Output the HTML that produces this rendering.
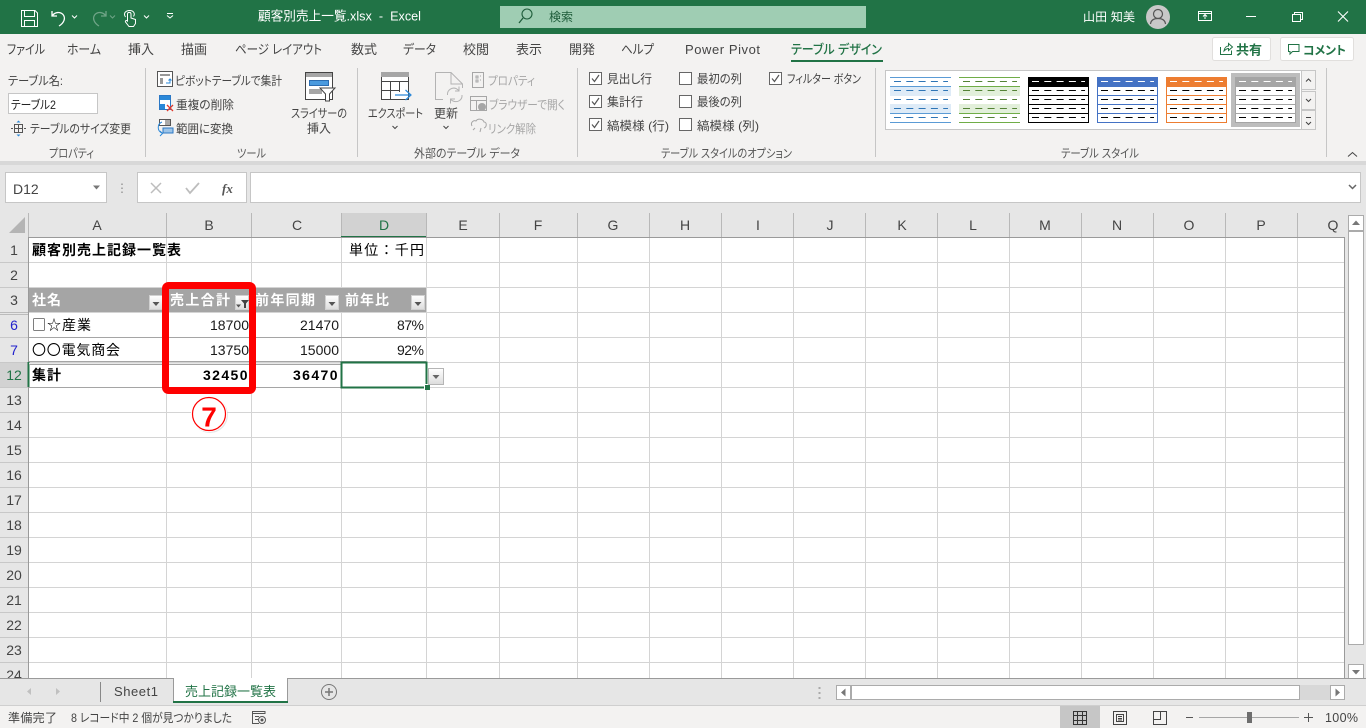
<!DOCTYPE html>
<html lang="ja"><head><meta charset="utf-8"><title>顧客別売上一覧.xlsx - Excel</title>
<style>
html,body{margin:0;padding:0;width:1366px;height:728px;overflow:hidden;background:#fff}
svg{display:block;position:absolute;left:0;top:0}
text{font-family:"Liberation Sans","Noto Sans CJK JP",sans-serif;font-size:12px;fill:#444;white-space:pre;font-feature-settings:"palt"}
.m{text-anchor:middle}
.e{text-anchor:end}
.w{fill:#fff}
.g{fill:#a6a6a6}
.l{fill:#555}
.t{font-size:13px}
.c{font-size:14px;fill:#000;font-feature-settings:normal}
.j{font-family:"Noto Sans CJK JP",sans-serif}
.b{font-size:14px;font-weight:700;fill:#000;font-feature-settings:normal}
.h{font-size:14px;font-weight:700;fill:#fff;font-feature-settings:normal}
.n{font-size:14px;fill:#444;text-anchor:middle}
.hd{font-size:14px;fill:#444;text-anchor:middle}
</style></head><body>
<svg width="1366" height="728" viewBox="0 0 1366 728" xmlns="http://www.w3.org/2000/svg">
<defs>
<g id="th">
<rect x=".5" y=".5" width="60" height="45" fill="#fff" stroke="currentColor"/>
<rect x="0" y="0" width="61" height="9.5" fill="currentColor"/>
<path d="M0 9.5H61M0 18.5H61M0 27.5H61M0 36.5H61" stroke="currentColor"/>
<path d="M4 4.5H57" stroke="#fff" stroke-dasharray="7 5.3"/>
<path d="M4 13.5H57M4 22.5H57M4 31.5H57M4 40.5H57" stroke="#000" stroke-dasharray="7 5.3"/>
</g>
<g id="fb"><rect x=".5" y=".5" width="13" height="14" fill="url(#fg)" stroke="#d0d0d0"/></g>
<linearGradient id="fg" x1="0" y1="0" x2="0" y2="1"><stop offset="0" stop-color="#fff"/><stop offset="1" stop-color="#dcdcdc"/></linearGradient>
</defs>

<!-- title bar -->
<rect width="1366" height="34" fill="#217346"/>
<g fill="none" stroke="#fff" stroke-width="1">
<path d="M21.500 10.500H35L37.500 13V26.500H21.500Z"/><path d="M24.500 10.500V16.500H34.500V10.500M24.500 26.500V20.500H34.500V26.500"/>
<path d="M52 11V16H57M52.500 15.500C55 12 60 11.500 63 14.500C66 18 64 23 59 26" stroke-width="1.300"/>
<path d="M72 15.500L74.500 18L77 15.500"/>
<g opacity=".35"><path d="M106 11V16H101M105.500 15.500C103 12 98 11.500 95 14.500C92 18 94 23 99 26" stroke-width="1.300"/><path d="M110 15.500L112.500 18L115 15.500"/></g>
<path d="M125.500 17C123 13.500 125.500 10.500 129.500 10.500C133.500 10.500 135.500 13.500 133.500 16.500M127.500 21V14C127.500 11.800 131 11.800 131 14V18L135.500 19.500V23.500L133.500 26.500H129L125.500 22C125 20.500 126.500 20 127.500 21Z"/>
<path d="M144 15.500L146.500 18L149 15.500M167 15.500L170 18L173 15.500M167 13.500H173"/>
</g>
<text x="258" y="20.500" class="w t" textLength="163" lengthAdjust="spacingAndGlyphs" style="font-feature-settings:normal">顧客別売上一覧.xlsx  -  Excel</text>
<rect x="500" y="6" width="366" height="22" fill="#9fcdb3"/>
<circle cx="527" cy="14" r="5" fill="none" stroke="#1e5c3a" stroke-width="1.100"/><path d="M523 18L519 23" stroke="#1e5c3a" stroke-width="1.300"/>
<text x="549" y="21" textLength="24" style="fill:#1e5c3a">検索</text>
<text x="1083" y="21" class="w" textLength="52">山田 知美</text>
<circle cx="1158" cy="17" r="12" fill="#c8c8c8"/>
<circle cx="1158" cy="14" r="4.500" fill="none" stroke="#555" stroke-width="1.200"/><path d="M1150.500 24C1151 20 1154 18.500 1158 18.500C1162 18.500 1165 20 1165.500 24" fill="none" stroke="#555" stroke-width="1.200"/>
<g fill="none" stroke="#fff">
<path d="M1198.500 11.500H1211.500V20.500H1198.500ZM1198.500 13.500H1211.500M1205 19V15M1203 16.500L1205 14.500L1207 16.500"/>
<path d="M1246 16.500H1256"/>
<path d="M1292.500 14.500H1300.500V21.500H1292.500ZM1294.500 14.500V12.500H1302.500V19.500H1300.500"/>
<path d="M1338 11.500L1348 21.500M1348 11.500L1338 21.500" stroke-width="1.100"/>
</g>

<!-- ribbon -->
<rect y="34" width="1366" height="127" fill="#f3f2f1"/>
<rect y="161" width="1366" height="4" fill="#d8d8d8"/>
<text x="7" y="54" class="t" textLength="38" lengthAdjust="spacingAndGlyphs">ファイル</text>
<text x="67" y="54" class="t" textLength="34" lengthAdjust="spacingAndGlyphs">ホーム</text>
<text x="128" y="54" class="t" textLength="26" lengthAdjust="spacingAndGlyphs">挿入</text>
<text x="181" y="54" class="t" textLength="26" lengthAdjust="spacingAndGlyphs">描画</text>
<text x="235" y="54" class="t" textLength="87" lengthAdjust="spacingAndGlyphs">ページ レイアウト</text>
<text x="351" y="54" class="t" textLength="26" lengthAdjust="spacingAndGlyphs">数式</text>
<text x="403" y="54" class="t" textLength="33" lengthAdjust="spacingAndGlyphs">データ</text>
<text x="463" y="54" class="t" textLength="26" lengthAdjust="spacingAndGlyphs">校閲</text>
<text x="516" y="54" class="t" textLength="26" lengthAdjust="spacingAndGlyphs">表示</text>
<text x="569" y="54" class="t" textLength="26" lengthAdjust="spacingAndGlyphs">開発</text>
<text x="621" y="54" class="t" textLength="33" lengthAdjust="spacingAndGlyphs">ヘルプ</text>
<text x="685" y="54" class="t" textLength="75">Power Pivot</text>
<text x="791" y="54" class="t" textLength="91" lengthAdjust="spacingAndGlyphs" style="fill:#217346;font-weight:500">テーブル デザイン</text>
<rect x="791" y="60" width="92" height="2" fill="#217346"/>
<rect x="1212.500" y="37.500" width="58" height="23" rx="2" fill="#fff" stroke="#e1dfdd"/>
<path d="M1220.500 47V54.500H1231.500V50.500M1224 51C1224.500 47.500 1226.500 46 1228.500 46V43.500L1232.500 47L1228.500 50.500V48.500C1227 48.500 1225.500 49.500 1224 51Z" fill="none" stroke="#217346"/>
<text x="1236" y="54.500" textLength="26" style="fill:#217346;font-weight:700;font-size:13px">共有</text>
<rect x="1280.500" y="37.500" width="73" height="23" rx="2" fill="#fff" stroke="#e1dfdd"/>
<path d="M1288.500 44.500H1299V51.500H1292.500L1290 54V51.500H1288.500Z" fill="none" stroke="#217346"/>
<text x="1303" y="54.500" textLength="43" lengthAdjust="spacingAndGlyphs" style="fill:#217346;font-weight:700">コメント</text>

<rect x="145" y="68" width="1" height="89" fill="#c6c6c6"/>
<rect x="357" y="68" width="1" height="89" fill="#c6c6c6"/>
<rect x="577" y="68" width="1" height="89" fill="#c6c6c6"/>
<rect x="875" y="68" width="1" height="89" fill="#c6c6c6"/>
<rect x="1326" y="68" width="1" height="89" fill="#c6c6c6"/>

<!-- properties -->
<text x="8" y="85" textLength="55" lengthAdjust="spacingAndGlyphs">テーブル名:</text>
<rect x="8.500" y="93.500" width="89" height="20" fill="#fff" stroke="#c6c6c6"/>
<text x="11" y="109" textLength="45" lengthAdjust="spacingAndGlyphs" style="fill:#222">テーブル2</text>
<path d="M14.500 124.500H22.500V132.500H14.500ZM14.500 128.500H22.500M18.500 124.500V132.500M11 128.500H13M24 128.500H26" fill="none" stroke="#555"/><path d="M18.500 120.500L16.500 122.500H20.500ZM18.500 136.500L16.500 134.500H20.500Z" fill="#2b88d8"/>
<text x="30" y="133" textLength="101" lengthAdjust="spacingAndGlyphs">テーブルのサイズ変更</text>
<text x="49" y="157.500" class="l" textLength="45" lengthAdjust="spacingAndGlyphs">プロパティ</text>

<!-- tools -->
<path d="M157.500 71.500H172.500V86.500H157.500Z" fill="#fff" stroke="#555"/><path d="M160 74H170V76H160ZM160 78H163V84H160Z" fill="#999"/><path d="M166 83H170V79M168.500 80.500L170 79L171.500 80.500" fill="none" stroke="#2b88d8"/>
<text x="175" y="85" textLength="107" lengthAdjust="spacingAndGlyphs">ピボットテーブルで集計</text>
<path d="M159.500 95.500H170.500V109.500H159.500Z" fill="#fff" stroke="#2b78c5"/><rect x="160" y="96" width="10" height="4" fill="#2b88d8"/><rect x="160" y="104" width="5" height="5" fill="#2b88d8"/><path d="M167 105L173 111M173 105L167 111" stroke="#e03a2e" stroke-width="1.300"/>
<text x="176" y="109" textLength="58" lengthAdjust="spacingAndGlyphs">重複の削除</text>
<path d="M159.500 119.500H170.500V125.500H159.500Z" fill="#fff" stroke="#555"/><rect x="165" y="120" width="5" height="5" fill="#aaa"/><rect x="163" y="128" width="10" height="5" fill="#9cc4e8" stroke="#2b78c5"/><path d="M162 122C157 124 157 131 162 133M160 131L162.500 133.500L160 136" fill="none" stroke="#2b88d8"/>
<text x="176" y="133" textLength="57" lengthAdjust="spacingAndGlyphs">範囲に変換</text>
<path d="M305.500 72.500H332.500V99.500H305.500Z" fill="#fff" stroke="#444"/><rect x="306" y="73" width="26" height="4" fill="#a6a6a6"/><rect x="309.500" y="80.500" width="19" height="5" fill="#4a9ade" stroke="#2b6cb0"/><rect x="309" y="89" width="13" height="5" fill="#a6a6a6"/>
<path d="M320 88H335L329.500 94V101H325.500V94Z" fill="#fff" stroke="#444"/>
<text x="291" y="117.500" textLength="56" lengthAdjust="spacingAndGlyphs">スライサーの</text>
<text x="307" y="132.500" textLength="24" lengthAdjust="spacingAndGlyphs">挿入</text>
<text x="237" y="157.500" class="l" textLength="29" lengthAdjust="spacingAndGlyphs">ツール</text>

<!-- external -->
<path d="M381.500 72.500H408.500V99.500H381.500ZM381.500 81.500H408.500M381.500 90.500H400M390.500 81.500V99.500M399.500 81.500V92" fill="#fff" stroke="#444"/><rect x="381" y="72" width="28" height="5" fill="#a6a6a6"/>
<path d="M395 95H410M405.500 90L411 95L405.500 100" fill="none" stroke="#2b88d8" stroke-width="1.200"/>
<text x="368" y="117.500" textLength="55" lengthAdjust="spacingAndGlyphs">エクスポート</text>
<path d="M392.500 126L395 128.500L397.500 126" fill="none" stroke="#444"/>
<path d="M435.500 72.500H451L462.500 84V88M443 99.500H435.500V72.500M451 72.500V84H462.500" fill="none" stroke="#b3b3b3"/>
<path d="M447.500 95C447 90 452 87 456 88.500L459 90.500M459 86.500V91H455M462 95C462.500 100 457.500 103 453 101L450.500 99.500M450.500 103.500V99H455" fill="none" stroke="#b3b3b3"/>
<text x="434" y="117.500" textLength="24" lengthAdjust="spacingAndGlyphs">更新</text>
<path d="M443.500 126L446 128.500L448.500 126" fill="none" stroke="#444"/>
<path d="M472.500 72.500H483.500V87.500H472.500Z M476 76H478V78H476ZM480 76H481M476 80H478V82H476ZM480 80H481" fill="none" stroke="#a6a6a6"/>
<text x="488" y="85" class="g" textLength="47" lengthAdjust="spacingAndGlyphs">プロパティ</text>
<path d="M470.500 96.500H486.500V110.500H470.500ZM470.500 100.500H486.500M476.500 100.500V110.500" fill="none" stroke="#a6a6a6"/><circle cx="482" cy="107" r="4" fill="#a6a6a6"/>
<text x="489" y="109" class="g" textLength="76" lengthAdjust="spacingAndGlyphs">ブラウザーで開く</text>
<path d="M472 126C470 122 474 120 476 121C478 118 483 119 484 122C487 122 487 127 484 128M473 130L475 128M480 132L481 128" fill="none" stroke="#a6a6a6"/>
<text x="488" y="133" class="g" textLength="48" lengthAdjust="spacingAndGlyphs">リンク解除</text>
<text x="414" y="157.500" class="l" textLength="106" lengthAdjust="spacingAndGlyphs">外部のテーブル データ</text>

<!-- checkboxes -->
<g fill="#fff" stroke="#666">
<rect x="589.500" y="72.500" width="12" height="12"/><rect x="589.500" y="95.500" width="12" height="12"/><rect x="589.500" y="118.500" width="12" height="12"/>
<rect x="679.500" y="72.500" width="12" height="12"/><rect x="679.500" y="95.500" width="12" height="12"/><rect x="679.500" y="118.500" width="12" height="12"/>
<rect x="769.500" y="72.500" width="12" height="12"/>
</g>
<g fill="none" stroke="#555" stroke-width="1.200">
<path d="M592 78.500L594.500 81.500L599 75"/><path d="M592 101.500L594.500 104.500L599 98"/><path d="M592 124.500L594.500 127.500L599 121"/><path d="M772 78.500L774.500 81.500L779 75"/>
</g>
<text x="607" y="83" textLength="45" lengthAdjust="spacingAndGlyphs">見出し行</text>
<text x="607" y="106" textLength="36">集計行</text>
<text x="607" y="130" textLength="62" lengthAdjust="spacingAndGlyphs">縞模様 (行)</text>
<text x="697" y="83" textLength="45" lengthAdjust="spacingAndGlyphs">最初の列</text>
<text x="697" y="106" textLength="45" lengthAdjust="spacingAndGlyphs">最後の列</text>
<text x="697" y="130" textLength="62" lengthAdjust="spacingAndGlyphs">縞模様 (列)</text>
<text x="787" y="83" textLength="74" lengthAdjust="spacingAndGlyphs">フィルター ボタン</text>
<text x="661" y="157.500" class="l" textLength="131" lengthAdjust="spacingAndGlyphs">テーブル スタイルのオプション</text>

<!-- gallery -->
<rect x="885.500" y="70.500" width="416" height="59" fill="#fff" stroke="#c6c6c6"/>
<rect x="890" y="86" width="61" height="10" fill="#deebf7"/><rect x="890" y="104" width="61" height="10" fill="#deebf7"/>
<path d="M890 77.500H951M890 86.500H951M890 113.500H951M890 122.500H951" stroke="#5b9bd5"/>
<path d="M894 81.500H948M894 90.500H948M894 99.500H948M894 108.500H948M894 117.500H948" stroke="#2e75b6" stroke-dasharray="7 5.300"/>
<rect x="959" y="86" width="61" height="10" fill="#e2efda"/><rect x="959" y="104" width="61" height="10" fill="#e2efda"/>
<path d="M959 77.500H1020M959 86.500H1020M959 113.500H1020M959 122.500H1020" stroke="#70ad47"/>
<path d="M963 81.500H1017M963 90.500H1017M963 99.500H1017M963 108.500H1017M963 117.500H1017" stroke="#548235" stroke-dasharray="7 5.300"/>
<use href="#th" x="1028" y="77" style="color:#000"/>
<use href="#th" x="1097" y="77" style="color:#4472c4"/>
<use href="#th" x="1166" y="77" style="color:#ed7d31"/>
<rect x="1231" y="73" width="69" height="54" fill="#bdbdbd"/>
<use href="#th" x="1235" y="77" style="color:#a5a5a5"/>
<rect x="1301.500" y="70.500" width="14" height="19" fill="#f3f2f1" stroke="#c6c6c6"/>
<rect x="1301.500" y="91.500" width="14" height="18" fill="#f3f2f1" stroke="#c6c6c6"/>
<rect x="1301.500" y="110.500" width="14" height="19" fill="#f3f2f1" stroke="#c6c6c6"/>
<path d="M1306 81.500L1308.500 79L1311 81.500M1306 99L1308.500 101.500L1311 99M1306 122L1308.500 124.500L1311 122M1306 117.500H1311" fill="none" stroke="#444"/>
<text x="1061" y="157.500" class="l" textLength="78" lengthAdjust="spacingAndGlyphs">テーブル スタイル</text>
<path d="M1348 156.500L1352.500 152.500L1357 156.500" fill="none" stroke="#444"/>

<!-- formula bar -->
<rect y="165" width="1366" height="47" fill="#e6e6e6"/>
<rect x="5.500" y="172.500" width="101" height="30" fill="#fff" stroke="#c6c6c6"/>
<text x="13" y="194" style="font-size:14px;fill:#444">D12</text>
<path d="M93 185.500H100L96.500 189.500Z" fill="#777"/>
<path d="M122 183.500V185M122 187.500V189M122 191.500V193" stroke="#999" stroke-width="1.500"/>
<rect x="137.500" y="172.500" width="109" height="30" fill="#fff" stroke="#c6c6c6"/>
<path d="M151 183L161 193M161 183L151 193" stroke="#bdbdbd" stroke-width="1.500" fill="none"/>
<path d="M186 188L190 193L199 183" stroke="#bdbdbd" stroke-width="1.800" fill="none"/>
<text x="222" y="193" style="font-family:'Liberation Serif',serif;font-style:italic;font-weight:700;font-size:13px;fill:#555">fx</text>
<rect x="250.500" y="172.500" width="1110" height="30" fill="#fff" stroke="#c6c6c6"/>
<path d="M1349 185L1352.500 188.500L1356 185" fill="none" stroke="#666" stroke-width="1.500"/>

<!-- column headers -->
<rect y="212" width="1346" height="25" fill="#e6e6e6"/>
<rect x="341" y="213" width="85" height="24" fill="#d2d2d2"/>
<path d="M9 233H25V217Z" fill="#b4b4b4"/>
<g fill="#b8b8b8">
<rect x="28" y="213" width="1" height="24"/><rect x="166" y="213" width="1" height="24"/><rect x="251" y="213" width="1" height="24"/><rect x="341" y="213" width="1" height="24"/><rect x="426" y="213" width="1" height="24"/><rect x="499" y="213" width="1" height="24"/><rect x="577" y="213" width="1" height="24"/><rect x="649" y="213" width="1" height="24"/><rect x="721" y="213" width="1" height="24"/><rect x="793" y="213" width="1" height="24"/><rect x="865" y="213" width="1" height="24"/><rect x="937" y="213" width="1" height="24"/><rect x="1009" y="213" width="1" height="24"/><rect x="1081" y="213" width="1" height="24"/><rect x="1153" y="213" width="1" height="24"/><rect x="1225" y="213" width="1" height="24"/><rect x="1297" y="213" width="1" height="24"/>
</g>
<rect x="341" y="236" width="85" height="2" fill="#217346"/>
<rect x="0" y="237" width="28" height="441" fill="#e6e6e6"/>
<rect x="0" y="362" width="28" height="25" fill="#d2d2d2"/>
<text class="hd" x="97" y="230">A</text><text class="hd" x="209" y="230">B</text><text class="hd" x="297" y="230">C</text><text class="hd" x="384" y="230" style="fill:#217346">D</text><text class="hd" x="463" y="230">E</text><text class="hd" x="538" y="230">F</text><text class="hd" x="613" y="230">G</text><text class="hd" x="685" y="230">H</text><text class="hd" x="758" y="230">I</text><text class="hd" x="830" y="230">J</text><text class="hd" x="902" y="230">K</text><text class="hd" x="973" y="230">L</text><text class="hd" x="1045" y="230">M</text><text class="hd" x="1117" y="230">N</text><text class="hd" x="1189" y="230">O</text><text class="hd" x="1261" y="230">P</text><text class="hd" x="1333" y="230">Q</text>

<!-- grid -->
<path d="M29 262.500H1344M29 287.500H1344M29 312.500H1344M29 337.500H1344M29 362.500H1344M29 387.500H1344M29 412.500H1344M29 437.500H1344M29 462.500H1344M29 487.500H1344M29 512.500H1344M29 537.500H1344M29 562.500H1344M29 587.500H1344M29 612.500H1344M29 637.500H1344M29 662.500H1344" stroke="#d4d4d4"/>
<path d="M166.500 237V678M251.500 237V678M341.500 237V678M426.500 237V678M499.500 237V678M577.500 237V678M649.500 237V678M721.500 237V678M793.500 237V678M865.500 237V678M937.500 237V678M1009.500 237V678M1081.500 237V678M1153.500 237V678M1225.500 237V678M1297.500 237V678" stroke="#d4d4d4"/>
<path d="M0 262.500H28M0 287.500H28M0 312.500H28M0 337.500H28M0 362.500H28M0 387.500H28M0 412.500H28M0 437.500H28M0 462.500H28M0 487.500H28M0 512.500H28M0 537.500H28M0 562.500H28M0 587.500H28M0 612.500H28M0 637.500H28M0 662.500H28" stroke="#c8c8c8"/>
<path d="M28.500 237V678" stroke="#9a9a9a"/>
<path d="M28.500 362V387" stroke="#217346" stroke-width="2"/>
<path d="M29 237.500H1345M1344.500 237V678" stroke="#9a9a9a"/>
<!-- row numbers -->
<text class="n" x="14" y="255">1</text><text class="n" x="14" y="280">2</text><text class="n" x="14" y="305">3</text><text class="n" x="14" y="330" style="fill:#2222cc">6</text><text class="n" x="14" y="355" style="fill:#2222cc">7</text><text class="n" x="14" y="380" style="fill:#217346">12</text><text class="n" x="14" y="405">13</text><text class="n" x="14" y="430">14</text><text class="n" x="14" y="455">15</text><text class="n" x="14" y="480">16</text><text class="n" x="14" y="505">17</text><text class="n" x="14" y="530">18</text><text class="n" x="14" y="555">19</text><text class="n" x="14" y="580">20</text><text class="n" x="14" y="605">21</text><text class="n" x="14" y="630">22</text><text class="n" x="14" y="655">23</text><text class="n" x="14" y="680">24</text>

<!-- table -->
<rect x="29" y="288" width="397" height="24" fill="#a5a5a5"/>
<path d="M29 337.500H426M29 361.500H426M29 364.500H426M29 387.500H426" stroke="#a5a5a5"/>
<rect x="29" y="363" width="397" height="1" fill="#e8e8e8"/>
<path d="M0 312.500H28M0 314.500H28" stroke="#bbb"/>
<text x="32" y="255" class="b" textLength="149">顧客別売上記録一覧表</text>
<text x="349" y="255" class="c" textLength="75">単位：千円</text>
<text x="32" y="305" class="h" textLength="29">社名</text>
<text x="170" y="305" class="h" textLength="60">売上合計</text>
<text x="255" y="305" class="h" textLength="60">前年同期</text>
<text x="345" y="305" class="h" textLength="44">前年比</text>
<use href="#fb" x="149" y="295"/><use href="#fb" x="235" y="295"/><use href="#fb" x="325" y="295"/><use href="#fb" x="411" y="295"/>
<path d="M152.500 302H159.500L156 306Z" fill="#555"/><path d="M328.500 302H335.500L332 306Z" fill="#555"/><path d="M414.500 302H421.500L418 306Z" fill="#555"/>
<path d="M241 300H249L246 303.500V308H244V303.500Z" fill="#444"/><path d="M236 304.500H241L238.500 307.500Z" fill="#555"/>
<text x="32" y="330" class="c j" textLength="59">□☆産業</text>
<text x="32" y="355" class="c j" textLength="88">〇〇電気商会</text>
<text x="32" y="380" class="b" textLength="29">集計</text>
<text x="249" y="330" class="c e" textLength="39" style="fill:#1a1a1a">18700</text>
<text x="249" y="355" class="c e" textLength="39" style="fill:#1a1a1a">13750</text>
<text x="339" y="330" class="c e" textLength="39" style="fill:#1a1a1a">21470</text>
<text x="339" y="355" class="c e" textLength="39" style="fill:#1a1a1a">15000</text>
<text x="424" y="330" class="c e" textLength="27" style="fill:#1a1a1a">87%</text>
<text x="424" y="355" class="c e" textLength="27" style="fill:#1a1a1a">92%</text>
<text x="203" y="380" class="b" textLength="44.500">32450</text>
<text x="293" y="380" class="b" textLength="44.500">36470</text>

<!-- selected cell -->
<rect x="341.500" y="362.500" width="85" height="25" fill="#fff" stroke="#217346" stroke-width="2"/>
<rect x="424" y="384" width="6" height="6" fill="#fff"/><rect x="425" y="385" width="5" height="5" fill="#217346"/>
<rect x="428.500" y="368.500" width="15" height="16" fill="url(#fg)" stroke="#b5b5b5"/>
<path d="M432.500 375H439.500L436 379Z" fill="#666"/>

<!-- red highlight -->
<rect x="165.500" y="285.500" width="87" height="105" rx="3" fill="none" stroke="#fe0000" stroke-width="7"/>
<circle cx="210" cy="415" r="18" fill="#cfcfcf" opacity=".5"/>
<circle cx="209" cy="414" r="18" fill="#fff"/>
<circle cx="209" cy="414" r="16.500" fill="#fff" stroke="#fe0000" stroke-width="1.200"/>
<text x="209" y="426.500" class="m" style="font-size:28px;font-weight:700;fill:#fe0000">7</text>

<!-- vertical scrollbar -->
<rect x="1345" y="212" width="21" height="466" fill="#e6e6e6"/>
<rect x="1348.500" y="215.500" width="15" height="15" fill="#fff" stroke="#ababab"/>
<path d="M1352 225L1356 220.500L1360 225Z" fill="#777"/>
<rect x="1348.500" y="231.500" width="15" height="413" fill="#fff" stroke="#ababab"/>
<rect x="1348.500" y="664.500" width="15" height="14" fill="#fff" stroke="#ababab"/>
<path d="M1352 670H1360L1356 674.500Z" fill="#777"/>

<!-- sheet tabs -->
<rect y="678" width="1366" height="27" fill="#e6e6e6"/>
<rect y="678" width="174" height="1" fill="#9a9a9a"/><rect x="287" y="678" width="1079" height="1" fill="#9a9a9a"/>
<path d="M31 688V695L27 691.500ZM56 688V695L60 691.500Z" fill="#c0c0c0"/>
<rect x="100" y="682" width="1" height="20" fill="#888"/>
<text x="114" y="696" textLength="44" style="font-size:13px;fill:#444">Sheet1</text>
<rect x="174" y="678" width="113" height="25" fill="#fff"/>
<path d="M173.500 678V702M287.500 678V702" stroke="#9a9a9a"/>
<rect x="173" y="701" width="115" height="2" fill="#217346"/>
<text x="185" y="696" textLength="91" style="font-size:13px;fill:#217346">売上記録一覧表</text>
<circle cx="329" cy="692" r="7.500" fill="none" stroke="#777"/><path d="M325 692H333M329 688V696" stroke="#777" stroke-width="1.500"/>
<path d="M819.500 687V689M819.500 692V694M819.500 697V699" stroke="#aaa" stroke-width="2"/>
<rect x="836" y="685" width="508" height="15" fill="#d8d8d8"/>
<rect x="836.500" y="685.500" width="14" height="14" fill="#fff" stroke="#ababab"/>
<rect x="851.500" y="685.500" width="448" height="14" fill="#fff" stroke="#ababab"/>
<rect x="1330.500" y="685.500" width="14" height="14" fill="#fff" stroke="#ababab"/>
<path d="M845.500 688.500V696.500L841 692.500ZM1335.500 688.500V696.500L1340 692.500Z" fill="#777"/>

<!-- status bar -->
<rect y="705" width="1366" height="23" fill="#f3f2f1"/>
<rect y="705" width="1366" height="1" fill="#cfcfcf"/>
<text x="8" y="722" textLength="49">準備完了</text>
<text x="71" y="722" textLength="161" lengthAdjust="spacingAndGlyphs">8 レコード中 2 個が見つかりました</text>
<path d="M252.500 711.500H265V713.500H252.500ZM252.500 713.500V723.500H259M255 716.500H259M255 719.500H258" fill="none" stroke="#555"/><circle cx="262" cy="720" r="3.500" fill="none" stroke="#555"/><circle cx="262" cy="720" r="1.500" fill="#555"/>
<rect x="1060" y="706" width="40" height="22" fill="#c6c6c6"/>
<path d="M1073.500 711.500H1086.500V724.500H1073.500ZM1077.500 711.500V724.500M1082.500 711.500V724.500M1073.500 715.500H1086.500M1073.500 720.500H1086.500" fill="none" stroke="#333"/>
<path d="M1113.500 711.500H1126.500V724.500H1113.500ZM1116.500 714.500H1123.500V721.500H1116.500ZM1118 716.500H1122M1118 718.500H1122M1118 720H1122" fill="none" stroke="#444"/>
<path d="M1153.500 711.500H1166.500V724.500H1153.500ZM1153.500 719.500H1160.500V711.500" fill="none" stroke="#444"/>
<path d="M1186 717.500H1193M1304 717.500H1313M1308.500 713V722" stroke="#555" fill="none"/>
<rect x="1199" y="717" width="100" height="1" fill="#a6a6a6"/>
<rect x="1247" y="712" width="5" height="11" fill="#6e6e6e"/>
<text x="1325" y="722" textLength="33" style="font-size:12.500px">100%</text>
</svg>
</body></html>
